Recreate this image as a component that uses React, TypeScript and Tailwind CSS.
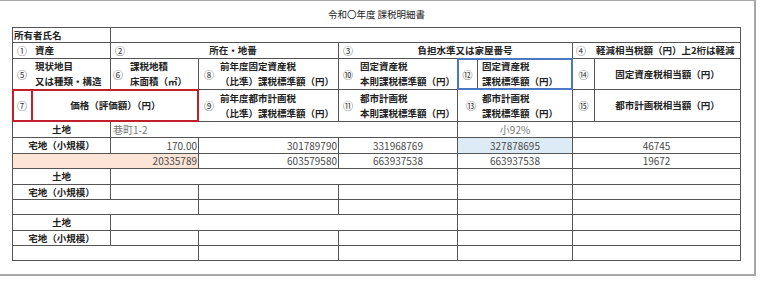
import React from "react";

const H = "bg-white flex items-center text-[9.5px] font-bold text-[#222] leading-[15px] whitespace-nowrap";
const D = "flex items-center text-[10px] text-[#4a4a4a] leading-none whitespace-nowrap";
const L = "bg-white flex items-center justify-center text-[9.5px] font-bold text-[#222] whitespace-nowrap";

function N({ c, w }: { c: string; w: string }) {
  return <span className={`${w} shrink-0 text-[10px] font-normal text-[#333]`}>{c}</span>;
}

function Group({ first }: { first: boolean }) {
  return (
    <>
      <div className={L}>土地</div>
      <div className={`${D} bg-white col-span-3 pl-[2px] text-[#777]`}>{first ? "巷町1-2" : ""}</div>
      <div className={`${D} bg-white justify-center text-[#777]`}>{first ? "小92%" : ""}</div>
      <div className={`${D} bg-white`} />

      <div className={L}>宅地（小規模）</div>
      <div className={`${D} bg-white justify-end pr-px`}>{first ? "170.00" : ""}</div>
      <div className={`${D} bg-white justify-end pr-px`}>{first ? "301789790" : ""}</div>
      <div className={`${D} bg-white justify-center`}>{first ? "331968769" : ""}</div>
      {first ? (
        <div className={`${D} bg-[#ddebf7] justify-center`}>327878695</div>
      ) : (
        <div className={`${D} bg-white`} />
      )}
      <div className={`${D} bg-white justify-center`}>{first ? "46745" : ""}</div>

      {first ? (
        <div className={`${D} bg-[#fce4d6] col-span-2 justify-end pr-px`}>20335789</div>
      ) : (
        <div className={`${D} bg-white col-span-2`} />
      )}
      <div className={`${D} bg-white justify-end pr-px`}>{first ? "603579580" : ""}</div>
      <div className={`${D} bg-white justify-center`}>{first ? "663937538" : ""}</div>
      <div className={`${D} bg-white justify-center`}>{first ? "663937538" : ""}</div>
      <div className={`${D} bg-white justify-center`}>{first ? "19672" : ""}</div>
    </>
  );
}

export default function App() {
  return (
    <div className="w-[768px] h-[282px] bg-white overflow-hidden font-['Noto_Sans_CJK_JP',sans-serif]">
      <div className="w-[756px] h-[276px] border-t border-r-2 border-b-2 border-[#a8a8a8]">
        <div className="w-[729px] ml-[12px] h-[26px] flex items-center justify-center text-[9.5px] text-[#222]">
          令和〇年度 課税明細書
        </div>
        <div className="w-[729px] ml-[12px] grid grid-cols-[97px_87px_139px_118px_114px_167px] grid-rows-[14px_15px_30px_31px_15px_15px_14px_15px_14px_14px_15px_14px_14px] gap-px p-px bg-[#555]">
          {/* row 1 */}
          <div className={`${H} pl-px`}>所有者氏名</div>
          <div className="col-span-5 bg-white" />

          {/* row 2 */}
          <div className={`${H} pl-[4px]`}>
            <N c="①" w="w-[18px]" />
            <span>資産</span>
          </div>
          <div className={`${H} col-span-2 pl-[4px]`}>
            <N c="②" w="w-[13px]" />
            <span className="flex-1 text-center">所在・地番</span>
          </div>
          <div className={`${H} col-span-2 pl-[4px]`}>
            <N c="③" w="w-[15px]" />
            <span className="flex-1 text-center">負担水準又は家屋番号</span>
          </div>
          <div className={`${H} pl-[3px]`}>
            <N c="④" w="w-[20px]" />
            <span>軽減相当税額（円）上2桁は軽減</span>
          </div>

          {/* row 3 */}
          <div className={`${H} pl-[4px]`}>
            <N c="⑤" w="w-[18px]" />
            <div className="flex flex-col">
              <span>現状地目</span>
              <span>又は種類・構造</span>
            </div>
          </div>
          <div className={`${H} pl-[2px]`}>
            <N c="⑥" w="w-[17px]" />
            <div className="flex flex-col">
              <span>課税地積</span>
              <span>床面積（㎡）</span>
            </div>
          </div>
          <div className={`${H} pl-[5px]`}>
            <N c="⑧" w="w-[16px]" />
            <div className="flex flex-col">
              <span>前年度固定資産税</span>
              <span>（比準）課税標準額（円）</span>
            </div>
          </div>
          <div className={`${H} pl-[4px]`}>
            <N c="⑩" w="w-[17px]" />
            <div className="flex flex-col">
              <span>固定資産税</span>
              <span>本則課税標準額（円）</span>
            </div>
          </div>
          <div className={`${H} relative z-10 outline-2 outline-[#4a78c2] -outline-offset-1`}>
            <span className="w-[20px] shrink-0 self-stretch flex items-center justify-center border-r border-[#555] text-[10px] font-normal text-[#333]">⑫</span>
            <div className="flex flex-col pl-[4px]">
              <span>固定資産税</span>
              <span>課税標準額（円）</span>
            </div>
          </div>
          <div className={H}>
            <span className="w-[22px] shrink-0 self-stretch flex items-center justify-center border-r border-[#555] text-[10px] font-normal text-[#333]">⑭</span>
            <span className="flex-1 text-center">固定資産税相当額（円）</span>
          </div>

          {/* row 4 */}
          <div className={`${H} col-span-2 relative z-10 outline-2 outline-[#c0202a] -outline-offset-1`}>
            <span className="w-[20px] shrink-0 self-stretch flex items-center justify-center border-r-2 border-[#c0202a] text-[10px] font-normal text-[#333]">⑦</span>
            <span className="flex-1 text-center">価格（評価額）（円）</span>
          </div>
          <div className={`${H} pl-[5px]`}>
            <N c="⑨" w="w-[16px]" />
            <div className="flex flex-col">
              <span>前年度都市計画税</span>
              <span>（比準）課税標準額（円）</span>
            </div>
          </div>
          <div className={`${H} pl-[4px]`}>
            <N c="⑪" w="w-[17px]" />
            <div className="flex flex-col">
              <span>都市計画税</span>
              <span>本則課税標準額（円）</span>
            </div>
          </div>
          <div className={`${H} pl-[8px]`}>
            <N c="⑬" w="w-[16px]" />
            <div className="flex flex-col">
              <span>都市計画税</span>
              <span>課税標準額（円）</span>
            </div>
          </div>
          <div className={H}>
            <span className="w-[22px] shrink-0 self-stretch flex items-center justify-center border-r border-[#555] text-[10px] font-normal text-[#333]">⑮</span>
            <span className="flex-1 text-center">都市計画税相当額（円）</span>
          </div>

          <Group first={true} />
          <Group first={false} />
          <Group first={false} />
        </div>
      </div>
    </div>
  );
}
